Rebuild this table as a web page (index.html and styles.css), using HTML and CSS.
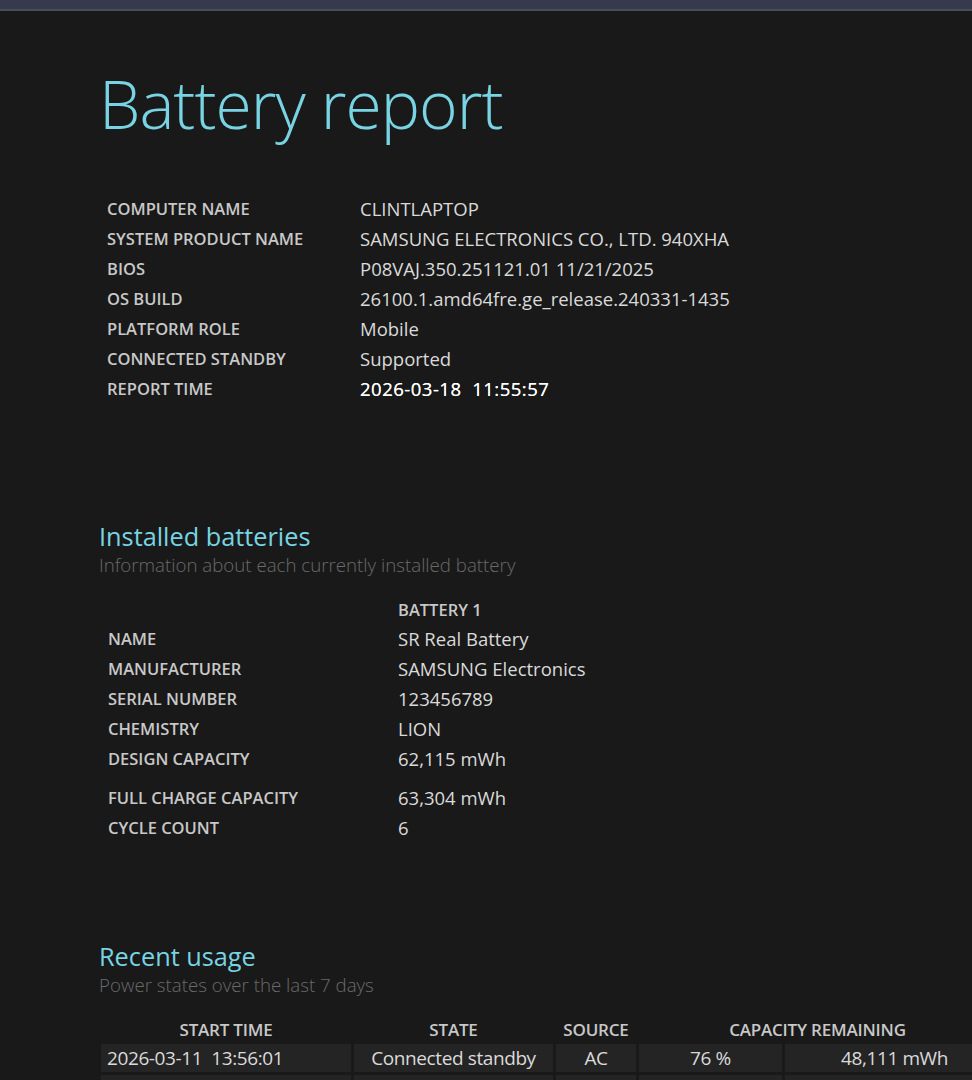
FILE: index.html
```html
<!DOCTYPE html>
<html lang="en">
<head>
<meta charset="utf-8">
<title>Battery report</title>
<link rel="stylesheet" href="styles.css">
</head>
<body>
<div class="topbar"></div>
<main class="page">
  <h1 class="title">Battery report</h1>

  <dl class="info">
    <dt>COMPUTER NAME</dt><dd>CLINTLAPTOP</dd>
    <dt>SYSTEM PRODUCT NAME</dt><dd>SAMSUNG ELECTRONICS CO., LTD. 940XHA</dd>
    <dt>BIOS</dt><dd>P08VAJ.350.251121.01 11/21/2025</dd>
    <dt>OS BUILD</dt><dd>26100.1.amd64fre.ge_release.240331-1435</dd>
    <dt>PLATFORM ROLE</dt><dd>Mobile</dd>
    <dt>CONNECTED STANDBY</dt><dd>Supported</dd>
    <dt>REPORT TIME</dt><dd class="strong">2026-03-18&nbsp; 11:55:57</dd>
  </dl>

  <section class="section batteries">
    <h2 class="heading">Installed batteries</h2>
    <p class="sub">Information about each currently installed battery</p>
    <dl class="battery">
      <dt></dt><dd class="colhead">BATTERY 1</dd>
      <dt>NAME</dt><dd>SR Real Battery</dd>
      <dt>MANUFACTURER</dt><dd>SAMSUNG Electronics</dd>
      <dt>SERIAL NUMBER</dt><dd>123456789</dd>
      <dt>CHEMISTRY</dt><dd>LION</dd>
      <dt>DESIGN CAPACITY</dt><dd>62,115 mWh</dd>
      <dt class="gap">FULL CHARGE CAPACITY</dt><dd class="gap">63,304 mWh</dd>
      <dt>CYCLE COUNT</dt><dd>6</dd>
    </dl>
  </section>

  <section class="section usage">
    <h2 class="heading">Recent usage</h2>
    <p class="sub">Power states over the last 7 days</p>
    <table class="usage-table">
      <colgroup>
        <col class="w1"><col class="w2"><col class="w3"><col class="w4"><col class="w5">
      </colgroup>
      <thead>
        <tr>
          <th>START TIME</th>
          <th>STATE</th>
          <th>SOURCE</th>
          <th colspan="2">CAPACITY REMAINING</th>
        </tr>
      </thead>
      <tbody>
        <tr>
          <td class="left">2026-03-11&nbsp; 13:56:01</td>
          <td>Connected standby</td>
          <td>AC</td>
          <td>76 %</td>
          <td class="right">48,111 mWh</td>
        </tr>
        <tr>
          <td class="left">&nbsp;</td>
          <td>&nbsp;</td>
          <td>&nbsp;</td>
          <td>&nbsp;</td>
          <td class="right">&nbsp;</td>
        </tr>
      </tbody>
    </table>
  </section>
</main>
</body>
</html>
```

FILE: styles.css
```css
html, body {
  margin: 0;
  padding: 0;
  background: #191919;
  overflow-x: hidden;
}
body {
  font-family: "Open Sans", "Noto Sans", sans-serif;
  color: #dcdcdc;
}
.topbar {
  height: 9px;
  background: #363a4c;
  border-bottom: 2px solid #4a4c58;
}
.page {
  padding-left: 99px;
}
.title {
  margin: 0;
  padding-top: 47px;
  font-weight: 300;
  font-size: 66px;
  line-height: 90px;
  letter-spacing: -1px;
  color: #78d4e3;
}
.info {
  display: grid;
  grid-template-columns: 253px auto;
  margin: 46px 0 0 8px;
}
.info dt, .battery dt {
  margin: 0;
  font-size: 16.5px;
  font-weight: 600;
  line-height: 30px;
  color: #c8c8c8;
}
.info dd, .battery dd {
  margin: 0;
  font-size: 18.5px;
  font-weight: 400;
  line-height: 30px;
  color: #dadada;
}
.info dd.strong {
  color: #ffffff;
  letter-spacing: 0.5px;
  text-shadow: 0 0 0.4px #ffffff;
}
.batteries {
  padding-top: 117px;
}
.heading {
  margin: 0;
  font-size: 25.3px;
  font-weight: 400;
  line-height: 30px;
  color: #78d4e3;
}
.sub {
  margin: 0;
  font-size: 18.7px;
  font-weight: 300;
  line-height: 28px;
  color: #6a6a6a;
}
.battery {
  display: grid;
  grid-template-columns: 290px auto;
  margin: 16px 0 0 9px;
}
.battery dd.colhead {
  font-size: 16.5px;
  font-weight: 600;
  line-height: 29px;
  color: #c8c8c8;
}
.battery .gap {
  padding-top: 9px;
}
.usage {
  padding-top: 98px;
}
.usage-table {
  margin: 16px 0 0 -1px;
  border-collapse: separate;
  border-spacing: 3px 3px;
  table-layout: fixed;
  width: 901px;
  font-size: 19px;
  letter-spacing: -0.4px;
}
.w1 { width: 250px; }
.w2 { width: 199px; }
.w3 { width: 80px; }
.w4 { width: 143px; }
.w5 { width: 211px; }
.usage-table th {
  font-size: 17px;
  font-weight: 600;
  letter-spacing: -0.2px;
  color: #c8c8c8;
  padding: 0;
  height: 22px;
  text-align: center;
  white-space: nowrap;
}
.usage-table td {
  background: #242424;
  height: 28px;
  padding: 0 6px;
  text-align: center;
  color: #dadada;
  white-space: nowrap;
  overflow: hidden;
}
.usage-table td.left { text-align: left; }
.usage-table td.right { text-align: right; padding-right: 48px; }
```
